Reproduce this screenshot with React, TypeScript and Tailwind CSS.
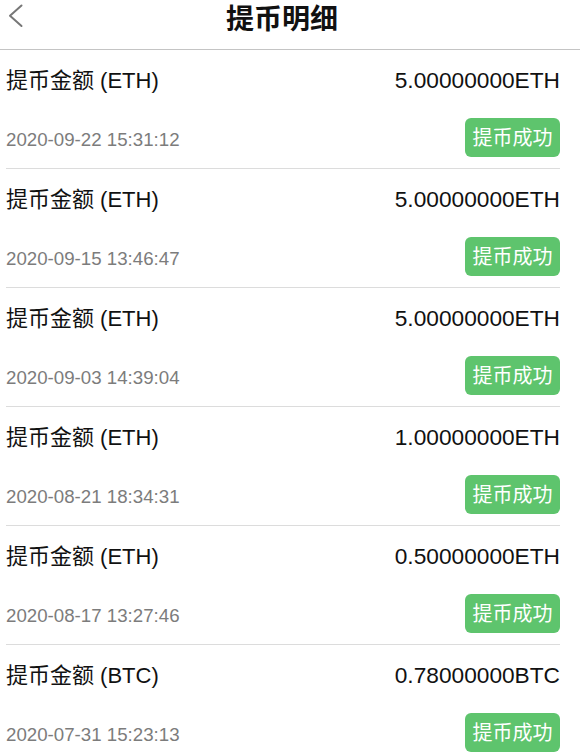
import React from "react";

const rows = [
  { label: "提币金额 (ETH)", amount: "5.00000000ETH", date: "2020-09-22 15:31:12" },
  { label: "提币金额 (ETH)", amount: "5.00000000ETH", date: "2020-09-15 13:46:47" },
  { label: "提币金额 (ETH)", amount: "5.00000000ETH", date: "2020-09-03 14:39:04" },
  { label: "提币金额 (ETH)", amount: "1.00000000ETH", date: "2020-08-21 18:34:31" },
  { label: "提币金额 (ETH)", amount: "0.50000000ETH", date: "2020-08-17 13:27:46" },
  { label: "提币金额 (BTC)", amount: "0.78000000BTC", date: "2020-07-31 15:23:13" },
];

const font = { fontFamily: '"Liberation Sans", "Noto Sans CJK SC", sans-serif' };

export default function App() {
  return (
    <div className="w-[580px] h-[756px] overflow-hidden bg-white" style={font}>
      <div className="grid grid-cols-[40px_1fr_56px] h-[50px] border-b border-[#c4c4c4]">
        <div className="pl-[8px] pt-[4px]">
          <svg width="16" height="24" viewBox="0 0 16 24" fill="none">
            <polyline points="13.5,1.5 2,11.8 13.5,22" stroke="#777" strokeWidth="2" strokeLinecap="round" strokeLinejoin="round" />
          </svg>
        </div>
        <div className="flex justify-center">
          <span className="text-[28px] leading-[40px] font-bold text-[#111]">提币明细</span>
        </div>
        <div />
      </div>
      <div className="pl-[6px] pr-[20px]">
        {rows.map((r, i) => (
          <div key={i} className="flex flex-col pt-[15px] pb-[11px] border-b border-[#dcdcdc]">
            <div className="flex justify-between items-center h-[30px] text-[22px] text-[#111]">
              <span>{r.label}</span>
              <span className="text-[22.7px]">{r.amount}</span>
            </div>
            <div className="flex justify-between items-center h-[39px] mt-[23px]">
              <span className="text-[18.7px] text-[#7c7c7c] mt-[5px]">{r.date}</span>
              <span className="flex items-center justify-center w-[95px] h-[39px] rounded-[6px] bg-[#5ec46d] text-white text-[20px]">
                提币成功
              </span>
            </div>
          </div>
        ))}
      </div>
    </div>
  );
}
